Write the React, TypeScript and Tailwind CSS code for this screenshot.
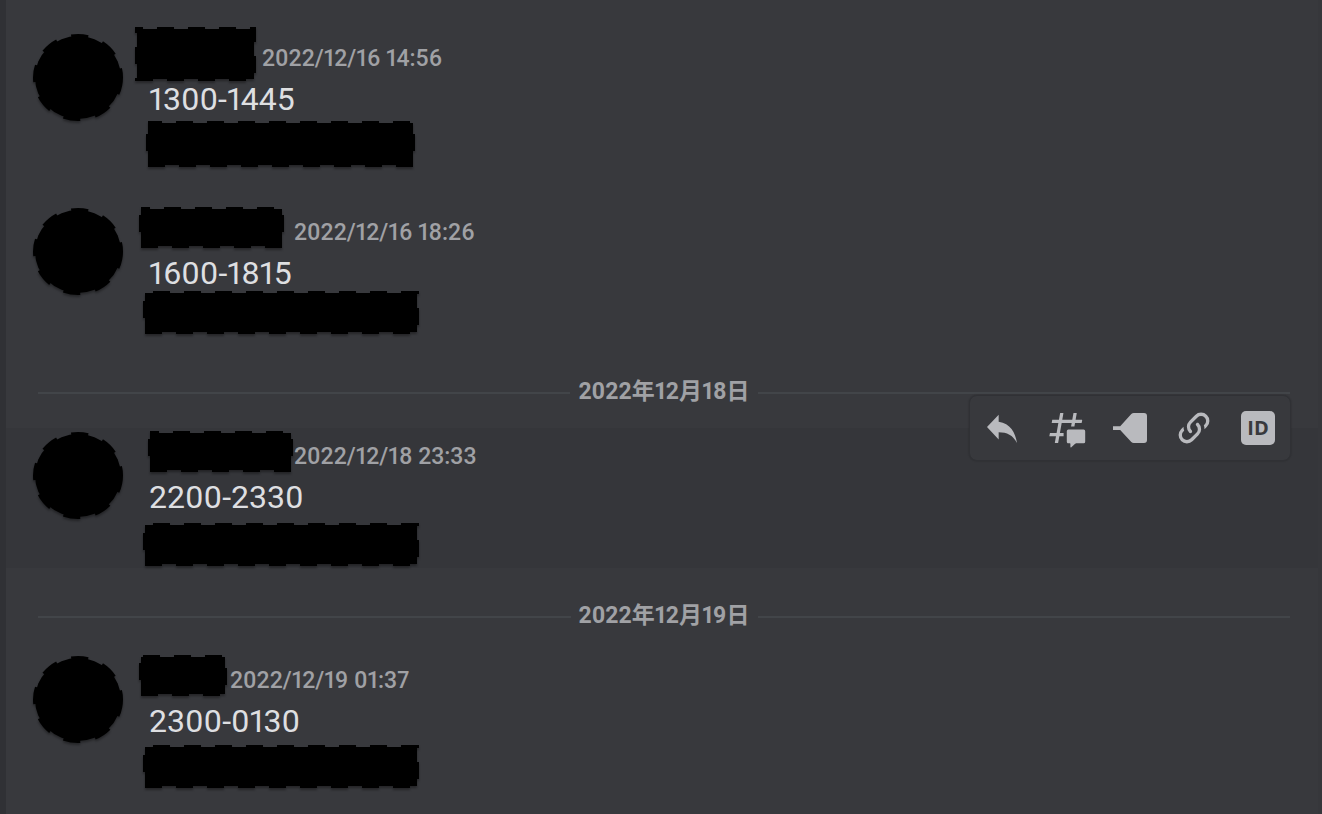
import type { ReactNode } from "react";
import clsx from "clsx";

type Redaction = {
  width: number;
  height: number;
  dashOffset: number;
  className?: string;
};

type Message = {
  name: Redaction;
  time: string;
  timeClass: string;
  text: string;
  body: Redaction;
};

const firstDay: Message[] = [
  {
    name: { width: 121, height: 54, dashOffset: 11 },
    time: "2022/12/16 14:56",
    timeClass: "ml-1.5",
    text: "1300-1445",
    body: { width: 269, height: 46, dashOffset: 3, className: "ml-[11px]" },
  },
  {
    name: { width: 145, height: 41, dashOffset: 8, className: "ml-1" },
    time: "2022/12/16 18:26",
    timeClass: "ml-2.5",
    text: "1600-1815",
    body: { width: 276, height: 43, dashOffset: 23, className: "-mt-1 ml-2" },
  },
];

const hovered: Message = {
  name: { width: 145, height: 41, dashOffset: 8, className: "ml-[13px]" },
  time: "2022/12/18 23:33",
  timeClass: "ml-px",
  text: "2200-2330",
  body: { width: 276, height: 43, dashOffset: 23, className: "mt-1 ml-2" },
};

const lastMessage: Message = {
  name: { width: 88, height: 41, dashOffset: 29, className: "ml-1" },
  time: "2022/12/19 01:37",
  timeClass: "ml-[3px]",
  text: "2300-0130",
  body: { width: 276, height: 43, dashOffset: 23, className: "mt-0.5 ml-2" },
};

const RedactedBar = ({ width, height, dashOffset, className }: Redaction) => (
  <svg
    width={width}
    height={height}
    aria-hidden="true"
    className={clsx(
      "block shrink-0 drop-shadow-[0_2px_1px_rgba(0,0,0,0.35)]",
      className
    )}
  >
    <rect
      x="2"
      y="2"
      width={width - 4}
      height={height - 4}
      stroke="black"
      strokeWidth="4"
      strokeDasharray="17 14"
      strokeDashoffset={dashOffset}
    />
  </svg>
);

const RedactedAvatar = () => (
  <svg
    width="91"
    height="88"
    aria-hidden="true"
    className="block shrink-0 drop-shadow-[0_2px_1px_rgba(0,0,0,0.35)]"
  >
    <ellipse
      cx="45"
      cy="43.5"
      rx="43"
      ry="41.5"
      stroke="black"
      strokeWidth="4"
      strokeDasharray="17 15"
    />
  </svg>
);

const MessageRow = ({
  message,
  active,
  children,
}: {
  message: Message;
  active?: boolean;
  children?: ReactNode;
}) => (
  <li
    className={clsx(
      "relative flex h-[140px] items-start pl-[27px]",
      active && "bg-[#35363a]"
    )}
  >
    <div className="pt-1">
      <RedactedAvatar />
    </div>
    <div className="ml-[11px]">
      <div className="flex h-[47px] items-center">
        <RedactedBar {...message.name} />
        <time
          className={clsx(
            "pt-2.5 text-[23px] leading-7 font-medium text-[#a0a1a5]",
            message.timeClass
          )}
        >
          {message.time}
        </time>
      </div>
      <p className="pl-3.5 text-[32px] leading-[44px] text-[#dedfe1]">
        {message.text}
      </p>
      <RedactedBar {...message.body} />
    </div>
    {children}
  </li>
);

const DateDivider = ({ label }: { label: string }) => (
  <li className="flex items-center gap-2 pt-[35px] pr-7 pb-[21px] pl-8">
    <div className="h-0.5 flex-1 bg-[#424549]" />
    <span className="pb-0.5 text-[23px] leading-[26px] font-bold text-[#a0a1a5]">
      {label}
    </span>
    <div className="h-0.5 flex-1 bg-[#424549]" />
  </li>
);

const ToolbarButton = ({
  label,
  children,
}: {
  label: string;
  children: ReactNode;
}) => (
  <button
    type="button"
    aria-label={label}
    className="flex size-16 cursor-pointer items-center justify-center"
  >
    {children}
  </button>
);

const Toolbar = () => (
  <div className="absolute -top-[33px] right-[27px] flex rounded-lg border border-[#303135] bg-[#38393d] text-[#b9babe] shadow-[0_0_1px_1px_rgba(0,0,0,0.08)]">
    <ToolbarButton label="返信">
      <svg width="40" height="40" viewBox="0 0 24 24" fill="currentColor">
        <path d="M10 8.267V4L3 11.467l7 7.466V14.56c5 0 8.5 1.707 11 6.44-1-6.333-4-11.667-11-12.733Z" />
      </svg>
    </ToolbarButton>
    <ToolbarButton label="スレッドを作成">
      <svg width="40" height="40" viewBox="0 0 24 24" fill="currentColor">
        <path d="M5.433 21a.12.12 0 0 1-.118-.141L6 17H2.143a.12.12 0 0 1-.118-.141l.308-1.76a.12.12 0 0 1 .118-.099H6.35l1.06-6H3.553a.12.12 0 0 1-.118-.141l.308-1.76A.12.12 0 0 1 3.86 7h3.9l.692-3.901A.12.12 0 0 1 8.57 3h1.757a.12.12 0 0 1 .118.141L9.76 7h6l.692-3.901A.12.12 0 0 1 16.57 3h1.757a.12.12 0 0 1 .118.141L17.76 7h3.857a.12.12 0 0 1 .118.141l-.308 1.76a.12.12 0 0 1-.118.099h-3.9l-.36 2.04H15.05L15.41 9h-6l-1.06 6h2.21v2H8l-.693 3.901a.12.12 0 0 1-.118.099H5.433Z" />
        <path d="M13.44 12.96a.96.96 0 0 0-.96.96v6.301c0 .53.43.96.96.96h.96a.24.24 0 0 1 .24.24v2.039c0 .208.247.317.4.178l2.446-2.209a.96.96 0 0 1 .643-.248h4.431a.96.96 0 0 0 .96-.96V13.92a.96.96 0 0 0-.96-.96h-9.12Z" />
      </svg>
    </ToolbarButton>
    <ToolbarButton label="未読にする">
      <svg width="40" height="40" viewBox="0 0 40 40" fill="currentColor">
        <path d="M3 18.2h7.2L21.3 6.1A3.5 3.5 0 0 1 24 5h10a3 3 0 0 1 3 3v24a3 3 0 0 1-3 3H24a3.5 3.5 0 0 1-2.7-1.1L10.2 22H3Z" />
      </svg>
    </ToolbarButton>
    <ToolbarButton label="リンクをコピー">
      <svg width="40" height="40" viewBox="0 0 24 24" fill="currentColor">
        <path d="M10.59 13.41c.41.39.41 1.03 0 1.42-.39.39-1.03.39-1.42 0a5.003 5.003 0 0 1 0-7.07l3.54-3.54a5.003 5.003 0 0 1 7.07 0 5.003 5.003 0 0 1 0 7.07l-1.49 1.49c.01-.82-.12-1.64-.4-2.42l.47-.48a2.982 2.982 0 0 0 0-4.24 2.982 2.982 0 0 0-4.24 0l-3.53 3.53a2.982 2.982 0 0 0 0 4.24zm2.82-4.24c.39-.39 1.03-.39 1.42 0a5.003 5.003 0 0 1 0 7.07l-3.54 3.54a5.003 5.003 0 0 1-7.07 0 5.003 5.003 0 0 1 0-7.07l1.49-1.49c-.01.82.12 1.64.4 2.43l-.47.47a2.982 2.982 0 0 0 0 4.24 2.982 2.982 0 0 0 4.24 0l3.53-3.53a2.982 2.982 0 0 0 0-4.24.973.973 0 0 1 0-1.42z" />
      </svg>
    </ToolbarButton>
    <ToolbarButton label="IDをコピー">
      <span className="flex size-[34px] items-center justify-center rounded-[5px] bg-[#b9babe] font-['Open_Sans'] text-xl leading-none font-bold text-[#38393d]">
        ID
      </span>
    </ToolbarButton>
  </div>
);

const App = () => {
  return (
    <main className="flex min-h-screen bg-[#38393d] font-[Roboto,'Noto_Sans_CJK_JP',sans-serif] proportional-nums">
      <div className="w-1.5 shrink-0 bg-[#303135]" />
      <ol className="flex-1 pt-[30px]">
        <MessageRow message={firstDay[0]} />
        <li className="h-[34px]" aria-hidden="true" />
        <MessageRow message={firstDay[1]} />
        <DateDivider label="2022年12月18日" />
        <MessageRow message={hovered} active>
          <Toolbar />
        </MessageRow>
        <DateDivider label="2022年12月19日" />
        <MessageRow message={lastMessage} />
      </ol>
      {/* scrollbar gutter */}
      <div className="w-1 shrink-0 bg-[#36373b]" />
    </main>
  );
};

export default App;
